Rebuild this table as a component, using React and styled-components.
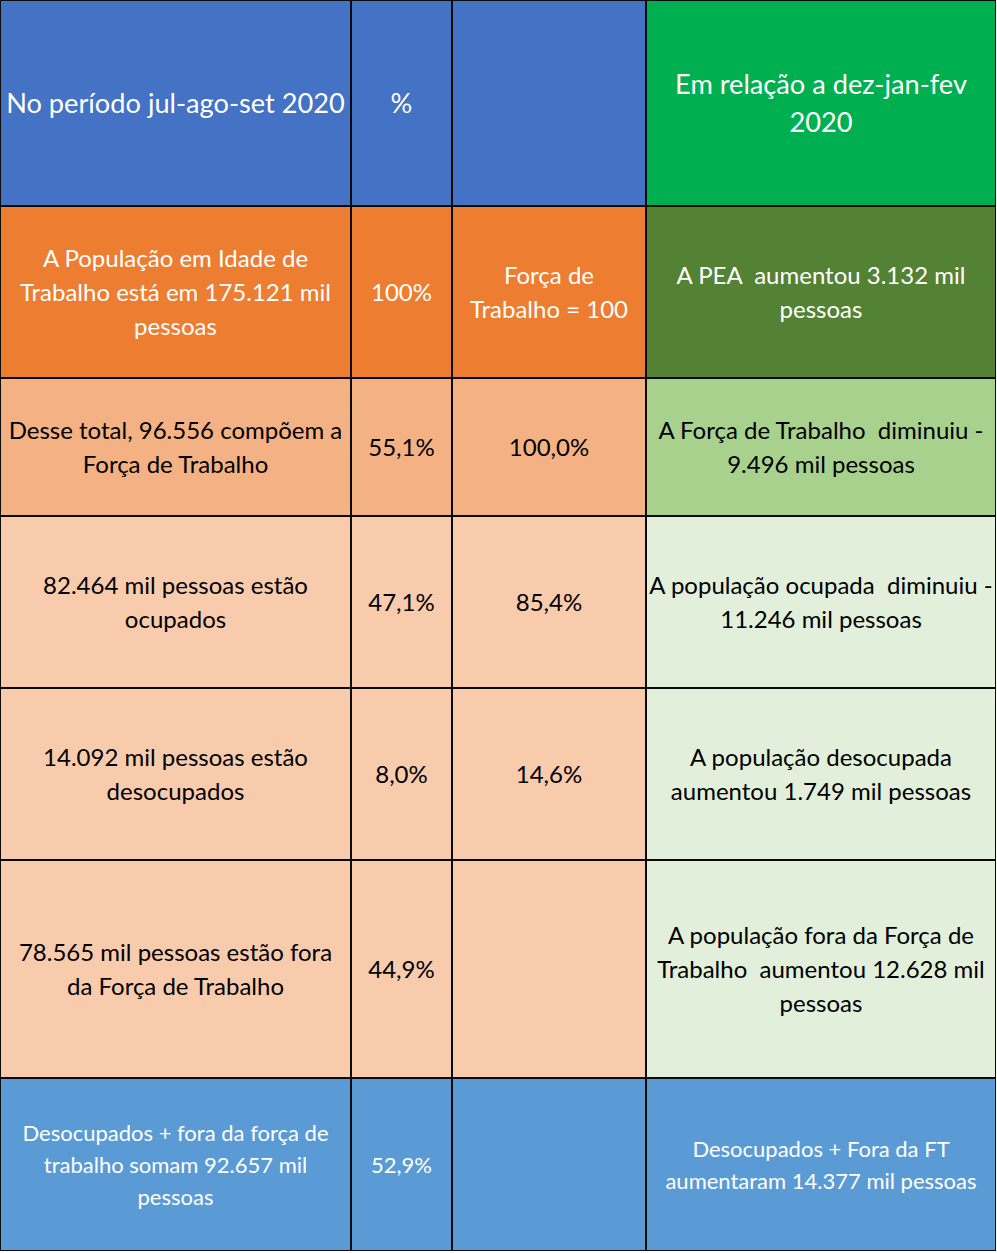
import React from 'react';
import styled, { createGlobalStyle } from 'styled-components';

const GlobalStyle = createGlobalStyle`
  html, body {
    margin: 0;
    padding: 0;
    background: #ffffff;
  }
  body {
    font-family: Lato, "Open Sans", "Liberation Sans", sans-serif;
  }
`

const Sheet = styled.div`
  display: grid;
  grid-template-columns: 349px 99px 192px 348px;
  grid-template-rows: 204px 170px 136px 170px 170px 216px 171px;
  gap: 2px;
  padding: 1px;
  width: max-content;
  background: #0b0b0b;
`

const Cell = styled.div`
  display: flex;
  align-items: center;
  justify-content: center;
  overflow: hidden;
  background: ${props => props.$bg};
  color: ${props => props.$color || '#000000'};
  font-size: ${props => props.$size || 24}px;
  line-height: ${props => props.$lh || 34}px;
`

const CellText = styled.p`
  margin: 0;
  width: 100%;
  text-align: center;
  white-space: pre;
`

const header = { $size: 27.2, $lh: 38, $color: '#ffffff' }
const footer = { $size: 22, $lh: 32, $color: '#ffffff' }

const rows = [
  {
    style: header,
    cells: [
      { bg: '#4472c4', text: 'No período jul-ago-set 2020' },
      { bg: '#4472c4', text: '%' },
      { bg: '#4472c4', text: '' },
      { bg: '#00b050', text: 'Em relação a dez-jan-fev\n2020' }
    ]
  },
  {
    style: { $color: '#ffffff' },
    cells: [
      { bg: '#ed7d31', text: 'A População em Idade de\nTrabalho está em 175.121 mil\npessoas' },
      { bg: '#ed7d31', text: '100%' },
      { bg: '#ed7d31', text: 'Força de\nTrabalho = 100' },
      { bg: '#548235', text: 'A PEA  aumentou 3.132 mil\npessoas' }
    ]
  },
  {
    style: {},
    cells: [
      { bg: '#f4b183', text: 'Desse total, 96.556 compõem a\nForça de Trabalho' },
      { bg: '#f4b183', text: '55,1%' },
      { bg: '#f4b183', text: '100,0%' },
      { bg: '#a9d18e', text: 'A Força de Trabalho  diminuiu -\n9.496 mil pessoas' }
    ]
  },
  {
    style: {},
    cells: [
      { bg: '#f8cbad', text: '82.464 mil pessoas estão\nocupados' },
      { bg: '#f8cbad', text: '47,1%' },
      { bg: '#f8cbad', text: '85,4%' },
      { bg: '#e2efda', text: 'A população ocupada  diminuiu -\n11.246 mil pessoas' }
    ]
  },
  {
    style: {},
    cells: [
      { bg: '#f8cbad', text: '14.092 mil pessoas estão\ndesocupados' },
      { bg: '#f8cbad', text: '8,0%' },
      { bg: '#f8cbad', text: '14,6%' },
      { bg: '#e2efda', text: 'A população desocupada\naumentou 1.749 mil pessoas' }
    ]
  },
  {
    style: {},
    cells: [
      { bg: '#f8cbad', text: '78.565 mil pessoas estão fora\nda Força de Trabalho' },
      { bg: '#f8cbad', text: '44,9%' },
      { bg: '#f8cbad', text: '' },
      { bg: '#e2efda', text: 'A população fora da Força de\nTrabalho  aumentou 12.628 mil\npessoas' }
    ]
  },
  {
    style: footer,
    cells: [
      { bg: '#5b9bd5', text: 'Desocupados + fora da força de\ntrabalho somam 92.657 mil\npessoas' },
      { bg: '#5b9bd5', text: '52,9%' },
      { bg: '#5b9bd5', text: '' },
      { bg: '#5b9bd5', text: 'Desocupados + Fora da FT\naumentaram 14.377 mil pessoas' }
    ]
  }
]

export default function App() {
  return (
    <>
      <GlobalStyle />
      <Sheet>
        {rows.map((row, i) =>
          row.cells.map((cell, j) => (
            <Cell key={'c' + i + '-' + j} $bg={cell.bg} {...row.style}>
              <CellText>{cell.text}</CellText>
            </Cell>
          ))
        )}
      </Sheet>
    </>
  );
}
